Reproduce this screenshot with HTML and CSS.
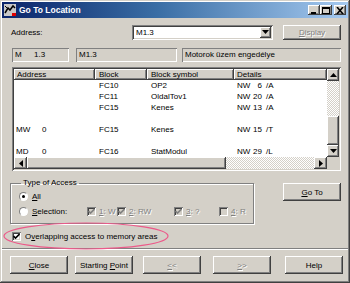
FILE: index.html
```html
<!DOCTYPE html>
<html lang="en">
<head>
    <meta charset="UTF-8">
    <title>Go To Location</title>
    <link rel="stylesheet" href="styles.css">
</head>
<body>
<div class="window">
    <div class="titlebar">
        <svg class="appicon" width="12" height="12" viewBox="0 0 12 12">
            <rect x="0" y="0" width="12" height="12" fill="#c8c8c8"/>
            <path d="M1 9 L4 4 L6 6 L9 2 L11 4" fill="none" stroke="#000" stroke-width="1.5"/>
            <path d="M3 4 L1 2" stroke="#000" stroke-width="1"/>
            <rect x="8" y="9" width="4" height="3" fill="#e00000"/>
        </svg>
        <span class="title">Go To Location</span>
        <div class="caption-btns">
            <span class="cbtn"><svg width="8" height="7" viewBox="0 0 8 7"><rect x="1" y="5" width="5" height="2" fill="#000"/></svg></span>
            <span class="cbtn"><svg width="8" height="7" viewBox="0 0 8 7"><rect x="0.5" y="0.5" width="7" height="6" fill="none" stroke="#000"/><rect x="0" y="0" width="8" height="2" fill="#000"/></svg></span>
            <span class="cbtn close"><svg width="8" height="7" viewBox="0 0 8 7"><path d="M1 0 L7 7 M7 0 L1 7" stroke="#000" stroke-width="1.6"/></svg></span>
        </div>
    </div>

    <div class="content">
        <div class="addr-row">
            <label class="addr-label">Address:</label>
            <div class="combo">
                <span class="combo-text">M1.3</span>
                <span class="combo-btn"><svg width="7" height="4" viewBox="0 0 7 4"><path d="M0 0 H7 L3.5 4 Z" fill="#000"/></svg></span>
            </div>
            <button class="btn disabled btn-display"><u>D</u>isplay</button>
        </div>

        <div class="info-row">
            <div class="field f1"><span class="f1-a">M</span><span>1.3</span></div>
            <div class="field f2">M1.3</div>
            <div class="field f3">Motorok üzem engedélye</div>
        </div>

        <div class="listview">
            <div class="lv-body">
                <div class="lv-header">
                    <span class="hcell c-addr">Address</span>
                    <span class="hcell c-block">Block</span>
                    <span class="hcell c-sym">Block symbol</span>
                    <span class="hcell c-det">Details</span>
                </div>
                <div class="lv-row"><span></span><span>FC10</span><span>OP2</span><span class="det"><span>NW</span><span class="num">6</span><span>/A</span></span></div>
                <div class="lv-row"><span></span><span>FC11</span><span>OldalTov1</span><span class="det"><span>NW</span><span class="num">20</span><span>/A</span></span></div>
                <div class="lv-row"><span></span><span>FC15</span><span>Kenes</span><span class="det"><span>NW</span><span class="num">13</span><span>/A</span></span></div>
                <div class="lv-row"></div>
                <div class="lv-row"><span class="addr"><span>MW</span><span>0</span></span><span>FC15</span><span>Kenes</span><span class="det"><span>NW</span><span class="num">15</span><span>/T</span></span></div>
                <div class="lv-row"></div>
                <div class="lv-row"><span class="addr"><span>MD</span><span>0</span></span><span>FC16</span><span>StatModul</span><span class="det"><span>NW</span><span class="num">29</span><span>/L</span></span></div>
            </div>
            <div class="vscroll">
                <span class="sbtn"><svg width="7" height="4" viewBox="0 0 7 4"><path d="M0 4 H7 L3.5 0 Z" fill="#000"/></svg></span>
                <span class="track"></span>
                <span class="thumb"></span>
                <span class="sbtn"><svg width="7" height="4" viewBox="0 0 7 4"><path d="M0 0 H7 L3.5 4 Z" fill="#000"/></svg></span>
            </div>
            <div class="hscroll">
                <span class="sbtn"><svg width="4" height="7" viewBox="0 0 4 7"><path d="M4 0 V7 L0 3.5 Z" fill="#000"/></svg></span>
                <span class="thumb hthumb"></span>
                <span class="track"></span>
                <span class="sbtn"><svg width="4" height="7" viewBox="0 0 4 7"><path d="M0 0 V7 L4 3.5 Z" fill="#000"/></svg></span>
            </div>
            <div class="corner"></div>
        </div>

        <div class="access-row">
            <fieldset class="group">
                <legend>Type of Access</legend>
                <div class="opt">
                    <span class="radio checked"></span>
                    <span class="opt-label"><u>A</u>ll</span>
                </div>
                <div class="opt">
                    <span class="radio"></span>
                    <span class="opt-label sel-label"><u>S</u>election:</span>
                    <div class="checks">
                        <span class="chk-item"><span class="chk dis on"><svg width="7" height="7" viewBox="0 0 7 7"><path d="M0.5 3 L2.5 5 L6.5 1" fill="none" stroke="#808080" stroke-width="1.6"/></svg></span><span class="dis-text"><u>1</u>: W</span></span>
                        <span class="chk-item"><span class="chk dis on"><svg width="7" height="7" viewBox="0 0 7 7"><path d="M0.5 3 L2.5 5 L6.5 1" fill="none" stroke="#808080" stroke-width="1.6"/></svg></span><span class="dis-text"><u>2</u>: RW</span></span>
                        <span class="chk-item"><span class="chk dis on"><svg width="7" height="7" viewBox="0 0 7 7"><path d="M0.5 3 L2.5 5 L6.5 1" fill="none" stroke="#808080" stroke-width="1.6"/></svg></span><span class="dis-text"><u>3</u>: ?</span></span>
                        <span class="chk-item"><span class="chk dis"></span><span class="dis-text"><u>4</u>: R</span></span>
                    </div>
                </div>
            </fieldset>
            <button class="btn btn-goto"><u>G</u>o To</button>
        </div>

        <div class="overlap-row">
            <span class="chk on"><svg width="7" height="7" viewBox="0 0 7 7"><path d="M0.5 3 L2.5 5 L6.5 1" fill="none" stroke="#000" stroke-width="1.6"/></svg></span>
            <span class="overlap-text">O<u>v</u>erlapping access to memory areas</span>
            <svg class="ring" width="168" height="30" viewBox="0 0 168 30">
                <ellipse cx="84" cy="15" rx="82" ry="13" fill="none" stroke="#ec5a8a" stroke-width="1.2"/>
            </svg>
        </div>
    </div>

    <div class="sep"></div>

    <div class="footer">
        <button class="btn b-close"><u>C</u>lose</button>
        <button class="btn b-start">Starting <u>P</u>oint</button>
        <button class="btn disabled b-prev"><u>&lt;</u>&lt;</button>
        <button class="btn disabled b-next"><u>&gt;</u>&gt;</button>
        <button class="btn b-help">Help</button>
    </div>
</div>
</body>
</html>
```

FILE: styles.css
```css
* {
    box-sizing: border-box;
}
body {
    margin: 0;
    font-family: "Liberation Sans", Arial, sans-serif;
    font-size: 8px;
    color: #000;
    background: #fff;
}
u {
    text-decoration: underline;
    text-underline-offset: 1px;
}
.window {
    width: 350px;
    height: 283px;
    padding: 2px;
    background: #d4d0c8;
    box-shadow: inset -1px -1px #404040, inset 1px 1px #d4d0c8, inset -2px -2px #808080, inset 2px 2px #fff;
    display: flex;
    flex-direction: column;
}
.titlebar {
    height: 16px;
    display: flex;
    align-items: center;
    padding: 0 2px 0 2px;
    background: linear-gradient(90deg, #0a246a 0%, #3a6ea5 45%, #a6caf0 100%);
}
.appicon {
    flex: none;
}
.title {
    margin-left: 3px;
    color: #fff;
    font-weight: bold;
    font-size: 8.5px;
}
.caption-btns {
    margin-left: auto;
    display: flex;
}
.cbtn {
    width: 12px;
    height: 10px;
    display: flex;
    align-items: center;
    justify-content: center;
    background: #d4d0c8;
    box-shadow: inset -1px -1px #404040, inset 1px 1px #fff, inset -2px -2px #808080;
}
.cbtn.close {
    margin-left: 2px;
}
.content {
    padding: 6px 7px 0 8px;
    display: flex;
    flex-direction: column;
}
.btn {
    font-family: inherit;
    font-size: 8px;
    color: #000;
    background: #d4d0c8;
    border: none;
    padding: 0;
    box-shadow: inset -1px -1px #404040, inset 1px 1px #fff, inset -2px -2px #808080, inset 2px 2px #d4d0c8;
}
.btn.disabled {
    color: #808080;
    text-shadow: 1px 1px #fff;
}
.addr-row {
    height: 16px;
    display: flex;
    align-items: center;
}
.addr-label {
    width: 122px;
    padding-left: 1px;
}
.combo {
    width: 141px;
    height: 15px;
    background: #fff;
    display: flex;
    align-items: center;
    padding: 2px;
    box-shadow: inset 1px 1px #808080, inset -1px -1px #fff, inset 2px 2px #404040, inset -2px -2px #d4d0c8;
}
.combo-text {
    flex: 1;
    padding-left: 2px;
}
.combo-btn {
    width: 11px;
    height: 11px;
    display: flex;
    align-items: center;
    justify-content: center;
    background: #d4d0c8;
    box-shadow: inset -1px -1px #404040, inset 1px 1px #fff, inset -2px -2px #808080;
}
.btn-display {
    margin-left: 10px;
    width: 58px;
    height: 15px;
}
.info-row {
    margin-top: 8px;
    height: 14px;
    display: flex;
}
.field {
    height: 14px;
    padding: 2px 3px;
    line-height: 10px;
    box-shadow: inset 1px 1px #808080, inset -1px -1px #fff;
}
.f1 {
    margin-left: 2px;
    width: 57px;
    display: flex;
}
.f1-a {
    width: 19px;
}
.f2 {
    margin-left: 7px;
    width: 101px;
}
.f3 {
    margin-left: 5px;
    flex: 1;
}
.listview {
    margin-top: 5px;
    margin-left: 2px;
    height: 104px;
    padding: 2px;
    background: #fff;
    box-shadow: inset 1px 1px #808080, inset -1px -1px #fff, inset 2px 2px #404040, inset -2px -2px #d4d0c8;
    display: grid;
    grid-template-columns: 1fr 12px;
    grid-template-rows: 88px 12px;
}
.lv-body {
    overflow: hidden;
}
.lv-header {
    height: 11px;
    display: grid;
    grid-template-columns: 81px 52px 87px 1fr;
}
.hcell {
    background: #d4d0c8;
    padding-left: 3px;
    line-height: 11px;
    box-shadow: inset -1px -1px #404040, inset 1px 1px #fff, inset -2px -2px #808080;
}
.c-block, .c-sym {
    padding-left: 4px;
}
.lv-row {
    height: 11px;
    line-height: 11px;
    display: grid;
    grid-template-columns: 81px 52px 87px 1fr;
}
.lv-row > span {
    padding-left: 4px;
}
.lv-row > .addr {
    padding-left: 2px;
    display: flex;
}
.addr > span:first-child {
    width: 26px;
}
.lv-row > .det {
    padding-left: 3px;
    display: flex;
}
.det > span:first-child {
    width: 15px;
}
.det .num {
    width: 10px;
    text-align: right;
    margin-right: 4px;
}
.vscroll {
    display: flex;
    flex-direction: column;
}
.sbtn {
    flex: none;
    width: 12px;
    height: 12px;
    display: flex;
    align-items: center;
    justify-content: center;
    background: #d4d0c8;
    box-shadow: inset -1px -1px #404040, inset 1px 1px #fff, inset -2px -2px #808080;
}
.hscroll .sbtn {
    width: 13px;
    height: 12px;
}
.track {
    flex: 1;
    background: repeating-conic-gradient(#d4d0c8 0 25%, #fff 0 50%) 0 0 / 2px 2px;
}
.thumb {
    flex: none;
    height: 29px;
    background: #d4d0c8;
    box-shadow: inset -1px -1px #404040, inset 1px 1px #fff, inset -2px -2px #808080;
}
.hscroll {
    display: flex;
}
.hscroll .hthumb {
    width: 199px;
    height: 12px;
}
.corner {
    background: #d4d0c8;
}
.access-row {
    margin-top: 7px;
    display: flex;
    align-items: flex-start;
}
.group {
    margin: 0;
    width: 244px;
    height: 46px;
    padding: 1px 0 0 8px;
    border: 1px solid #808080;
    box-shadow: inset 1px 1px #fff, 1px 1px #fff;
}
.group legend {
    margin-left: 2px;
    padding: 0 2px;
    line-height: 10px;
}
.opt {
    height: 15px;
    display: flex;
    align-items: center;
}
.radio {
    position: relative;
    width: 9px;
    height: 9px;
    border-radius: 50%;
    background: #fff;
    border: 1px solid;
    border-color: #808080 #fff #fff #808080;
}
.radio.checked::after {
    content: "";
    position: absolute;
    left: 2px;
    top: 2px;
    width: 3px;
    height: 3px;
    border-radius: 50%;
    background: #000;
}
.opt-label {
    margin-left: 4px;
}
.sel-label {
    width: 55px;
}
.checks {
    display: grid;
    grid-template-columns: 30px 57px 45px auto;
}
.chk-item {
    display: flex;
    align-items: center;
}
.chk {
    width: 9px;
    height: 9px;
    display: flex;
    align-items: center;
    justify-content: center;
    background: #fff;
    box-shadow: inset 1px 1px #808080, inset -1px -1px #fff, inset 2px 2px #404040, inset -2px -2px #d4d0c8;
}
.chk.dis {
    background: #d4d0c8;
}
.dis-text {
    margin-left: 3px;
    color: #808080;
    text-shadow: 1px 1px #fff;
}
.btn-goto {
    margin-left: 29px;
    margin-top: 5px;
    width: 58px;
    height: 18px;
}
.overlap-row {
    position: relative;
    margin-top: 7px;
    margin-left: 2px;
    height: 10px;
    display: flex;
    align-items: center;
}
.overlap-text {
    margin-left: 4px;
}
.ring {
    position: absolute;
    left: -10px;
    top: -10px;
}
.sep {
    margin-top: 7px;
    height: 2px;
    border-top: 1px solid #808080;
    border-bottom: 1px solid #fff;
}
.footer {
    margin-top: 6px;
    padding-left: 8px;
    display: flex;
}
.footer .btn {
    height: 18px;
    width: 58px;
}
.b-start {
    margin-left: 7px;
}
.b-prev {
    margin-left: 10px;
}
.b-next {
    margin-left: 12px;
}
.b-help {
    margin-left: 14px;
}
```
